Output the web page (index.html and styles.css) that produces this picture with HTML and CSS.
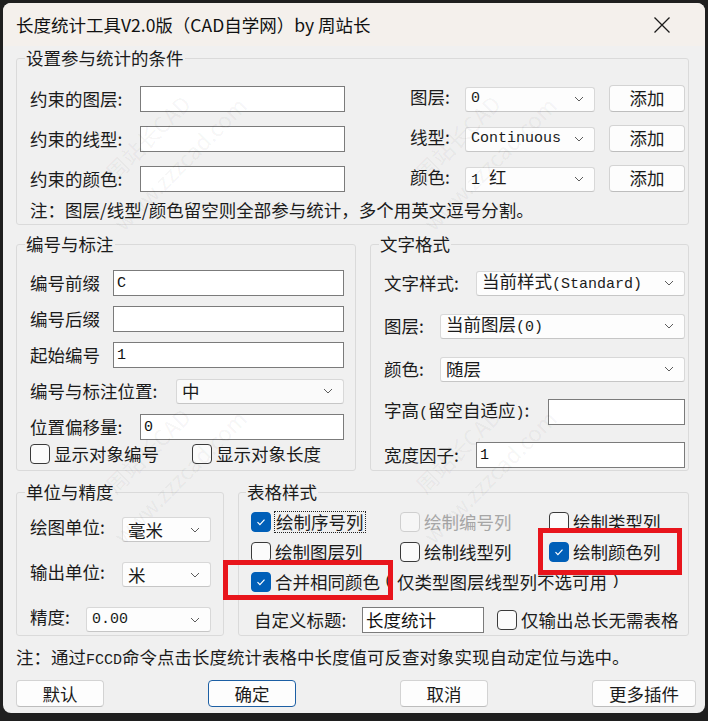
FILE: index.html
```html
<!DOCTYPE html>
<html lang="zh-CN">
<head>
  <meta charset="UTF-8">
  <title>长度统计工具V2.0版</title>
  <link rel="stylesheet" href="styles.css">
</head>
<body>
  <div class="window">
    <div class="titlebar">
      <span class="title">长度统计工具V2.0版（CAD自学网）by 周站长</span>
      <span class="close">
        <svg width="18" height="18" viewBox="0 0 18 18"><path d="M1.5 1.5L16.5 16.5M16.5 1.5L1.5 16.5" stroke="#1a1a1a" stroke-width="1.3" fill="none"/></svg>
      </span>
    </div>

    <div class="content">
      <fieldset class="group cond">
        <legend>设置参与统计的条件</legend>
        <div class="cond-grid">
          <label>约束的图层:</label>
          <input class="field cond-field" type="text">
          <label class="side">图层:</label>
          <div class="combo cond-combo"><span class="lat">0</span><svg class="chev" viewBox="0 0 10 6"><path d="M1 1l4 4 4-4"/></svg></div>
          <button class="btn add">添加</button>

          <label>约束的线型:</label>
          <input class="field cond-field" type="text">
          <label class="side">线型:</label>
          <div class="combo cond-combo"><span class="lat">Continuous</span><svg class="chev" viewBox="0 0 10 6"><path d="M1 1l4 4 4-4"/></svg></div>
          <button class="btn add">添加</button>

          <label>约束的颜色:</label>
          <input class="field cond-field" type="text">
          <label class="side">颜色:</label>
          <div class="combo cond-combo"><span><span class="lat">1 </span>红</span><svg class="chev" viewBox="0 0 10 6"><path d="M1 1l4 4 4-4"/></svg></div>
          <button class="btn add">添加</button>
        </div>
        <p class="note">注：图层/线型/颜色留空则全部参与统计，多个用英文逗号分割。</p>
      </fieldset>

      <div class="mid">
        <fieldset class="group numbering">
          <legend>编号与标注</legend>
          <div class="rows">
            <div class="row"><label class="w83">编号前缀</label><input class="field" type="text" value="C"></div>
            <div class="row"><label class="w83">编号后缀</label><input class="field" type="text"></div>
            <div class="row"><label class="w83">起始编号</label><input class="field" type="text" value="1"></div>
            <div class="row"><label class="w146">编号与标注位置:</label><div class="combo soft"><span>中</span><svg class="chev" viewBox="0 0 10 6"><path d="M1 1l4 4 4-4"/></svg></div></div>
            <div class="row"><label class="w110">位置偏移量:</label><input class="field" type="text" value="0"></div>
          </div>
          <div class="checks">
            <label class="check first"><span class="box"></span>显示对象编号</label>
            <label class="check"><span class="box"></span>显示对象长度</label>
          </div>
        </fieldset>

        <fieldset class="group text-style">
          <legend>文字格式</legend>
          <div class="rows">
            <div class="row"><label class="w92">文字样式:</label><div class="combo"><span>当前样式<span class="lat">(Standard)</span></span><svg class="chev" viewBox="0 0 10 6"><path d="M1 1l4 4 4-4"/></svg></div></div>
            <div class="row"><label class="w56">图层:</label><div class="combo"><span>当前图层<span class="lat">(0)</span></span><svg class="chev" viewBox="0 0 10 6"><path d="M1 1l4 4 4-4"/></svg></div></div>
            <div class="row"><label class="w56">颜色:</label><div class="combo"><span>随层</span><svg class="chev" viewBox="0 0 10 6"><path d="M1 1l4 4 4-4"/></svg></div></div>
            <div class="row"><label class="w164">字高<span class="lat">(</span>留空自适应<span class="lat">)</span>:</label><input class="field" type="text"></div>
            <div class="row"><label class="w92">宽度因子:</label><input class="field" type="text" value="1"></div>
          </div>
        </fieldset>
      </div>

      <div class="bottom">
        <fieldset class="group units">
          <legend>单位与精度</legend>
          <div class="rows">
            <div class="row"><label class="w92">绘图单位:</label><div class="combo"><span>毫米</span><svg class="chev" viewBox="0 0 10 6"><path d="M1 1l4 4 4-4"/></svg></div></div>
            <div class="row"><label class="w92">输出单位:</label><div class="combo"><span>米</span><svg class="chev" viewBox="0 0 10 6"><path d="M1 1l4 4 4-4"/></svg></div></div>
            <div class="row"><label class="w56">精度:</label><div class="combo"><span class="lat">0.00</span><svg class="chev" viewBox="0 0 10 6"><path d="M1 1l4 4 4-4"/></svg></div></div>
          </div>
        </fieldset>

        <fieldset class="group table-style">
          <legend>表格样式</legend>
          <div class="check-grid">
            <label class="check"><span class="box on"><svg viewBox="0 0 12 12"><path d="M2.5 6.2l2.4 2.4 4.6-5"/></svg></span><span class="focus">绘制序号列</span></label>
            <label class="check disabled"><span class="box"></span>绘制编号列</label>
            <label class="check"><span class="box"></span>绘制类型列</label>

            <label class="check"><span class="box"></span>绘制图层列</label>
            <label class="check"><span class="box"></span>绘制线型列</label>
            <label class="check"><span class="box on"><svg viewBox="0 0 12 12"><path d="M2.5 6.2l2.4 2.4 4.6-5"/></svg></span>绘制颜色列</label>

            <label class="check wide"><span class="box on"><svg viewBox="0 0 12 12"><path d="M2.5 6.2l2.4 2.4 4.6-5"/></svg></span>合并相同颜色<span class="lat">(</span>仅类型图层线型列不选可用<span class="lat">)</span></label>
          </div>
          <div class="title-row">
            <label class="w108">自定义标题:</label>
            <input class="field title-field" type="text" value="长度统计">
            <label class="check total"><span class="box"></span>仅输出总长无需表格</label>
          </div>
        </fieldset>
      </div>

      <p class="foot-note">注：通过<span class="lat">FCCD</span>命令点击长度统计表格中长度值可反查对象实现自动定位与选中。</p>

      <div class="actions">
        <button class="btn">默认</button>
        <button class="btn primary">确定</button>
        <button class="btn">取消</button>
        <button class="btn more">更多插件</button>
      </div>
    </div>

    <!-- annotation marks drawn over the dialog -->
    <div class="mark mark-merge"></div>
    <div class="mark mark-color"></div>

    <div class="watermark">
      <span class="wm" style="left:144px;top:134px">周站长CAD</span>
      <span class="wm" style="left:176px;top:160px">www.zzzcad.com</span>
      <span class="wm" style="left:454px;top:134px">周站长CAD</span>
      <span class="wm" style="left:486px;top:160px">www.zzzcad.com</span>
      <span class="wm" style="left:144px;top:447px">周站长CAD</span>
      <span class="wm" style="left:176px;top:473px">www.zzzcad.com</span>
      <span class="wm" style="left:454px;top:447px">周站长CAD</span>
      <span class="wm" style="left:486px;top:473px">www.zzzcad.com</span>
    </div>
  </div>
</body>
</html>
```

FILE: styles.css
```css
* {
  box-sizing: border-box;
}
body {
  margin: 0;
  background: #1f1f1f;
  font-family: "Noto Sans CJK SC", sans-serif;
  font-size: 17.5px;
  line-height: 20px;
  color: #1b1b1b;
}
.window {
  position: relative;
  width: 702px;
  height: 710px;
  margin: 3px 0 0 3px;
  background: #f0f0f0;
  border-radius: 8px;
  overflow: hidden;
}
.titlebar {
  height: 43px;
  background: #f4f0ec;
  display: flex;
  align-items: center;
  justify-content: space-between;
  padding-left: 13px;
}
.title {
  color: #111;
}
.close {
  width: 46px;
  height: 43px;
  margin-right: 20px;
  display: flex;
  align-items: center;
  justify-content: center;
}
.content {
  padding: 0 16px 0 13px;
}

/* group boxes */
.group {
  margin: 0;
  min-width: 0;
  border: 1px solid #dadada;
  border-radius: 3px;
}
.group legend {
  margin-left: -5px;
  padding: 0 1px;
  line-height: 20px;
}
.cond {
  margin-top: 2px;
  padding: 0 3px 4px 13px;
}
.cond-grid {
  display: grid;
  grid-template-columns: 110px 270px 55px 144px 76px;
  grid-auto-rows: 28px;
  row-gap: 12px;
  align-items: center;
  padding-top: 17px;
}
.cond-grid .side {
  margin-top: -4px;
}
.cond-field {
  width: 205px;
}
.cond-combo {
  width: 130px;
}
.note {
  margin: 7px 0 0;
}

.mid {
  display: flex;
  gap: 14px;
  margin-top: 9px;
}
.numbering {
  width: 340px;
  padding: 0 11px 6px 13px;
}
.text-style {
  width: 319px;
  padding: 0 3px 2px 13px;
}
.rows {
  display: flex;
  flex-direction: column;
  gap: 10px;
  padding-top: 16px;
}
.text-style .rows {
  gap: 17px;
}
.row {
  display: flex;
  align-items: center;
  height: 26px;
}
.row label {
  flex: none;
}
.row .field,
.row .combo {
  flex: 1;
  min-width: 0;
}
.w56 { width: 56px; }
.w83 { width: 83px; }
.w92 { width: 92px; }
.w108 { width: 108px; }
.w110 { width: 110px; }
.w146 { width: 146px; }
.w164 { width: 164px; }

.bottom {
  display: flex;
  gap: 14px;
  margin-top: 11px;
}
.units {
  width: 208px;
  padding: 0 12px 3px 13px;
}
.units .rows {
  gap: 20px;
  padding-top: 15px;
}
.units .row {
  height: 25px;
}
.units .row label {
  margin-top: -6px;
}
.table-style {
  width: 451px;
  padding: 0 5px 2px 12px;
}
.check-grid {
  display: grid;
  grid-template-columns: 149px 149px auto;
  grid-auto-rows: 20px;
  row-gap: 10px;
  padding-top: 10px;
}
.check-grid .wide {
  grid-column: 1 / -1;
}
.title-row {
  display: flex;
  align-items: center;
  height: 27px;
  margin-top: 14px;
  padding-left: 3px;
}
.title-field {
  width: 122px;
  height: 27px;
}
.check.total {
  margin-left: 13px;
}

/* controls */
.lat {
  font-family: "Liberation Mono", monospace;
  font-size: 15px;
}
.field {
  height: 26px;
  border: 1px solid #7b7b7b;
  background: #fff;
  padding: 0 3px;
  font-family: "Liberation Mono", "Noto Sans CJK SC", monospace;
  font-size: 15px;
  color: #111;
  outline: none;
}
.title-field {
  font-family: "Noto Sans CJK SC", sans-serif;
  font-size: 17.5px;
}
.combo {
  height: 25px;
  display: flex;
  align-items: center;
  justify-content: space-between;
  padding: 0 10px 0 5px;
  background: #fdfdfd;
  border: 1px solid #d8d8d8;
  border-bottom-color: #c6c6c6;
  border-radius: 3px;
  white-space: nowrap;
}
.combo.soft {
  background: #fafafa;
}
.chev {
  width: 10px;
  height: 6px;
  flex: none;
}
.chev path {
  fill: none;
  stroke: #5c5c5c;
  stroke-width: 1;
}
.check {
  display: flex;
  align-items: center;
  gap: 4px;
  white-space: nowrap;
}
.checks {
  display: flex;
  align-items: center;
  height: 20px;
  margin-top: 4px;
}
.check.first {
  width: 162px;
}
.box {
  width: 20px;
  height: 20px;
  flex: none;
  border: 1px solid #3a3a3a;
  border-radius: 4px;
  background: #fbfbfb;
  display: flex;
  align-items: center;
  justify-content: center;
}
.box.on {
  background: #005fb8;
  border-color: #005fb8;
}
.box svg {
  width: 12px;
  height: 12px;
}
.box svg path {
  fill: none;
  stroke: #fff;
  stroke-width: 1.2;
}
.check.disabled {
  color: #a6a6a6;
}
.check.disabled .box {
  border-color: #cfcfcf;
  background: #f6f6f6;
}
.focus {
  outline: 1px dotted #222;
  outline-offset: 0;
  padding: 0 1px;
}

.foot-note {
  margin: 11px 0 0;
}
.actions {
  display: flex;
  gap: 104px;
  width: 680px;
  margin-top: 9px;
}
.btn {
  width: 88px;
  height: 27px;
  padding: 0;
  border: 1px solid #d3d3d3;
  border-bottom-color: #bdbdbd;
  border-radius: 4px;
  background: #fdfdfd;
  font: inherit;
  color: #1b1b1b;
}
.btn.add {
  width: 76px;
  margin-top: -2px;
}
.btn.more {
  width: 104px;
}
.btn.primary {
  border: 1px solid #1c5fa4;
}

/* red annotation boxes */
.mark {
  position: absolute;
  border: 5px solid #e8151c;
}
.mark-merge {
  left: 220px;
  top: 557px;
  width: 170px;
  height: 40px;
}
.mark-color {
  left: 535px;
  top: 525px;
  width: 144px;
  height: 47px;
}

.watermark {
  position: absolute;
  inset: 0;
  pointer-events: none;
}
.wm {
  position: absolute;
  font-size: 22px;
  color: rgba(0, 0, 0, 0.05);
  white-space: nowrap;
  transform: translate(-50%, -50%) rotate(-45deg);
}
```
